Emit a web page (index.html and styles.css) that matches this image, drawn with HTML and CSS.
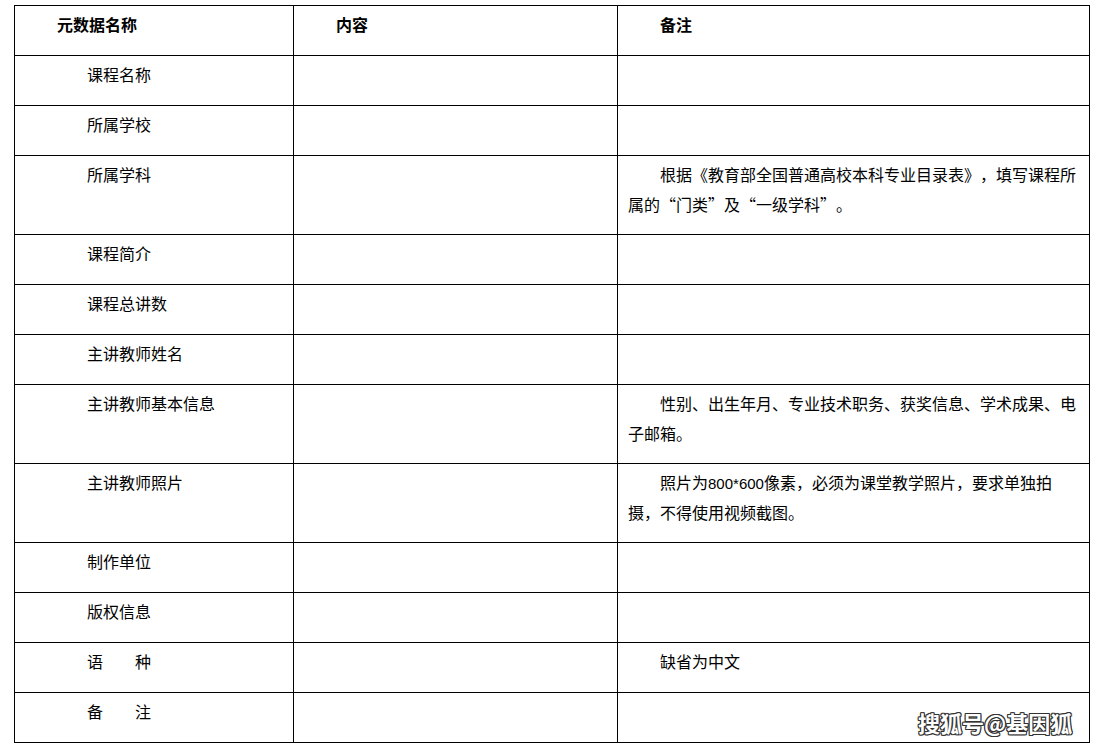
FILE: index.html
```html
<!DOCTYPE html>
<html lang="zh-CN">
<head>
<meta charset="utf-8">
<title>元数据</title>
<link rel="stylesheet" href="styles.css">
</head>
<body>
<div class="page">
<table class="meta">
  <colgroup>
    <col class="c1">
    <col class="c2">
    <col class="c3">
  </colgroup>
  <thead>
    <tr class="r1">
      <th class="head">元数据名称</th>
      <th class="head">内容</th>
      <th class="head">备注</th>
    </tr>
  </thead>
  <tbody>
    <tr class="r1"><td class="label">课程名称</td><td></td><td></td></tr>
    <tr class="r1"><td class="label">所属学校</td><td></td><td></td></tr>
    <tr class="r2"><td class="label">所属学科</td><td></td><td class="note"><p>根据《教育部全国普通高校本科专业目录表》，填写课程所属的“门类”及“一级学科”。</p></td></tr>
    <tr class="r1"><td class="label">课程简介</td><td></td><td></td></tr>
    <tr class="r1"><td class="label">课程总讲数</td><td></td><td></td></tr>
    <tr class="r1"><td class="label">主讲教师姓名</td><td></td><td></td></tr>
    <tr class="r2"><td class="label">主讲教师基本信息</td><td></td><td class="note"><p>性别、出生年月、专业技术职务、获奖信息、学术成果、电子邮箱。</p></td></tr>
    <tr class="r2"><td class="label">主讲教师照片</td><td></td><td class="note"><p>照片为<span class="num">800*600</span>像素，必须为课堂教学照片，要求单独拍摄，不得使用视频截图。</p></td></tr>
    <tr class="r1"><td class="label">制作单位</td><td></td><td></td></tr>
    <tr class="r1"><td class="label">版权信息</td><td></td><td></td></tr>
    <tr class="r1"><td class="label">语　　种</td><td></td><td class="note"><p>缺省为中文</p></td></tr>
    <tr class="r1"><td class="label">备　　注</td><td></td><td></td></tr>
  </tbody>
</table>
<div class="watermark">搜狐号@基因狐</div>
</div>
</body>
</html>
```

FILE: styles.css
```css
html, body {
  margin: 0;
  padding: 0;
  background: #ffffff;
}
body {
  width: 1100px;
  height: 750px;
  overflow: hidden;
  font-family: "Noto Sans CJK SC", "Noto Sans", sans-serif;
  font-size: 16px;
  color: #000000;
  text-spacing-trim: space-all;
}
.page {
  position: relative;
  width: 1100px;
  height: 750px;
  padding: 5px 0 0 14px;
  box-sizing: border-box;
}
.meta {
  border-collapse: collapse;
  table-layout: fixed;
  width: 1075px;
}
.c1 { width: 279px; }
.c2 { width: 324px; }
.c3 { width: 472px; }
.meta th,
.meta td {
  border: 1px solid #000000;
  vertical-align: top;
  text-align: left;
  padding: 3px 10px 0 10px;
  line-height: 30px;
  font-weight: normal;
}
.meta th.head {
  font-weight: bold;
  padding-left: 42px;
}
.meta td.label {
  padding-left: 72px;
}
.r1 { height: 50px; }
.r2 { height: 79px; }
.note p {
  margin: 0;
  line-height: 30px;
  text-indent: 32px;
  font-feature-settings: "fwid" 1;
}
.num {
  font-family: "Liberation Sans", sans-serif;
  font-size: 15px;
  line-height: 15px;
  font-feature-settings: normal;
}
.watermark {
  position: absolute;
  left: 918px;
  top: 706px;
  font-size: 22px;
  font-weight: bold;
  color: #ffffff;
  text-shadow: 1px 1px 0 #333, -1px -1px 0 #333, 1px -1px 0 #333, -1px 1px 0 #333, 0 1px 0 #333, 1px 0 0 #333, 0 -1px 0 #333, -1px 0 0 #333;
}
```
